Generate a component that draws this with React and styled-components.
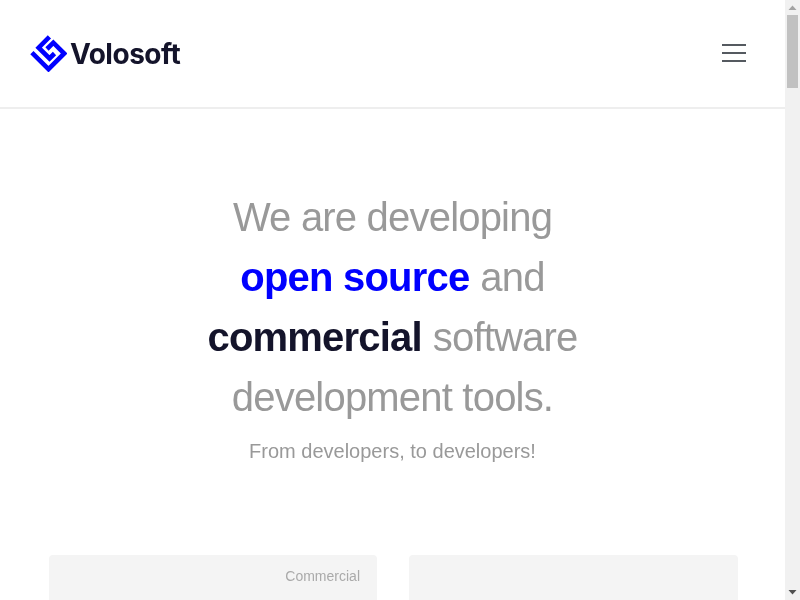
import React from "react";
import styled, { createGlobalStyle } from "styled-components";

const Global = createGlobalStyle`
  html, body {
    margin: 0;
    padding: 0;
    background: #fff;
    overflow: hidden;
    font-family: "Liberation Sans", Arial, sans-serif;
  }
`;

function Logo() {
  return (
    <LogoLink>
      <svg width="37" height="37" viewBox="0 0 37 37" fill="none">
        <g stroke="#0000ff" strokeWidth="4.6" strokeLinejoin="miter">
          <path d="M1.9 17.6 L18.5 34.2 L34.2 18.5 L23.35 7.65 L17 14" />
          <path d="M19.4 1.9 L8.65 12.65 L19.5 23.5 L24.5 18.5" />
        </g>
      </svg>
      <LogoText>Volosoft</LogoText>
    </LogoLink>
  );
}

function FakeScrollbar() {
  return (
    <Rail>
      <svg width="15" height="15" viewBox="0 0 15 15">
        <path d="M3.5 10 L7.5 5.5 L11.5 10 Z" fill="#a3a3a3" />
      </svg>
      <Thumb />
      <RailSpace />
      <svg width="15" height="15" viewBox="0 0 15 15">
        <path d="M3.5 5 L11.5 5 L7.5 9.5 Z" fill="#505050" />
      </svg>
    </Rail>
  );
}

export default function App() {
  return (
    <Frame>
      <Global />
      <Page>
        <Header>
          <Logo />
          <Burger aria-label="menu">
            <span />
            <span />
            <span />
          </Burger>
        </Header>
        <Hero>
          <HeroTitle>
            We are developing
            <br />
            <Blue>open source</Blue> and
            <br />
            <Dark>commercial</Dark> software
            <br />
            development tools.
          </HeroTitle>
          <HeroSub>From developers, to developers!</HeroSub>
        </Hero>
        <Cards>
          <Card>
            <CardTag>Commercial</CardTag>
          </Card>
          <Card />
        </Cards>
      </Page>
      <FakeScrollbar />
    </Frame>
  );
}

const Frame = styled.div`
  display: flex;
  height: 600px;
  overflow: hidden;
`;

const Page = styled.main`
  flex: 1;
  min-width: 0;
  will-change: transform;
`;

const Rail = styled.div`
  width: 15px;
  flex: none;
  display: flex;
  flex-direction: column;
  background: #f1f1f1;
  svg {
    display: block;
    flex: none;
  }
`;

const Thumb = styled.div`
  height: 73px;
  margin: 0 2px;
  background: #c1c1c1;
`;

const RailSpace = styled.div`
  flex: 1;
`;

const Header = styled.header`
  height: 107px;
  border-bottom: 2px solid #eeeeee;
  display: flex;
  align-items: center;
  justify-content: space-between;
  padding: 0 39px 0 30px;
`;

const LogoLink = styled.a`
  display: flex;
  align-items: center;
  gap: 3px;
`;

const LogoText = styled.span`
  font-family: Inter, sans-serif;
  font-weight: 700;
  font-size: 28px;
  letter-spacing: -0.5px;
  color: #14142b;
`;

const Burger = styled.button`
  width: 24px;
  padding: 0;
  margin-bottom: 1px;
  border: none;
  background: none;
  display: flex;
  flex-direction: column;
  gap: 6px;
  span {
    display: block;
    height: 2px;
    background: #555a60;
  }
`;

const Hero = styled.section`
  padding-top: 78px;
  text-align: center;
`;

const HeroTitle = styled.h1`
  margin: 0;
  font-size: 40px;
  line-height: 60px;
  font-weight: 400;
  letter-spacing: -0.8px;
  color: #999999;
`;

const Blue = styled.strong`
  color: #0000ff;
  margin-right: 0.6px;
`;

const Dark = styled.strong`
  color: #14142b;
  margin-right: 0.6px;
`;

const HeroSub = styled.p`
  margin: 9px 0 0;
  font-size: 20px;
  line-height: 30px;
  color: #999999;
`;

const Cards = styled.div`
  display: grid;
  grid-template-columns: 328px 329px;
  gap: 32px;
  padding: 89px 0 0 49px;
`;

const Card = styled.div`
  height: 400px;
  background: #f4f4f4;
  border-radius: 4px;
  padding: 12px 17px;
  text-align: right;
`;

const CardTag = styled.span`
  font-size: 14px;
  line-height: 18px;
  color: #aaaaaa;
`;
